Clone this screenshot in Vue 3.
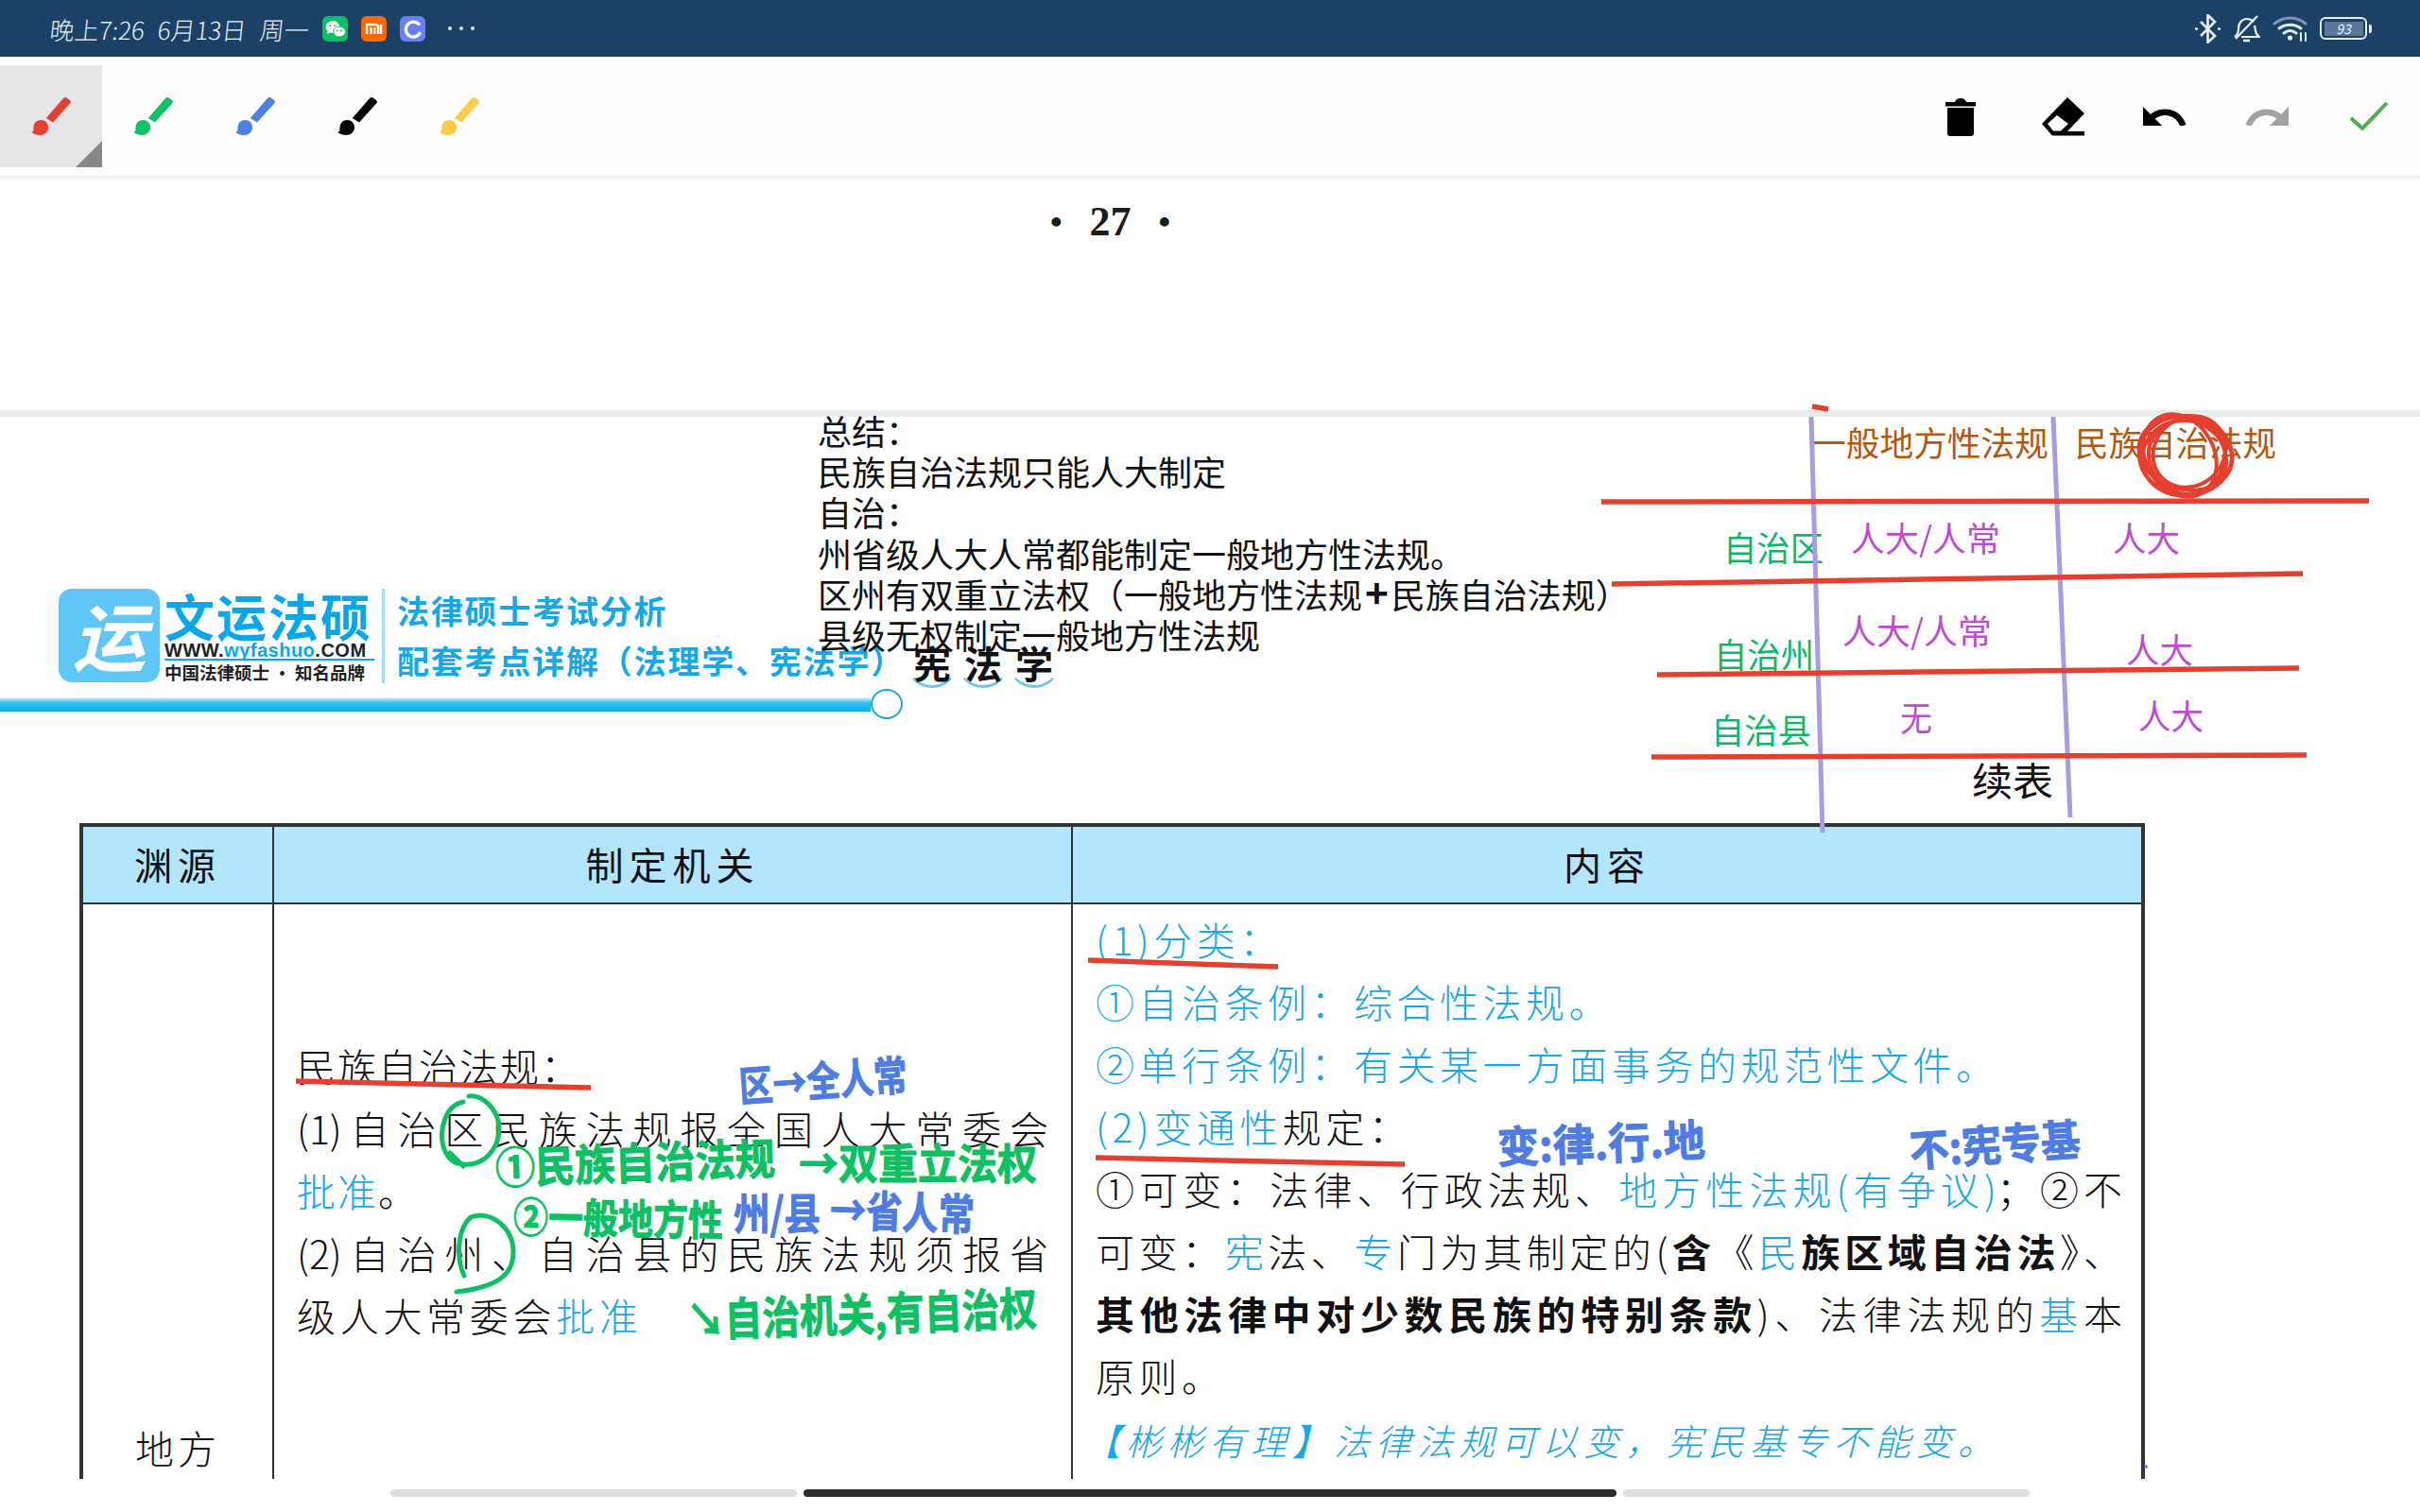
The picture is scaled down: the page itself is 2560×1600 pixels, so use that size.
<script setup>
const leftTools = [
  { color: '#e5402f', active: true },
  { color: '#08c463' },
  { color: '#4f7fe6' },
  { color: '#000000' },
  { color: '#ffcb45' }
]

const cn = (c, s) => Math.round(c + s * 0.36)

// typed notes on the canvas: left edge, centre line, size, width
const typed = [
  { t: '一般地方性法规', x: 1917, c: 470, s: 36, w: 250, fill: '#b4580f' },
  { t: '民族自治法规', x: 2195, c: 470, s: 36, w: 213, fill: '#b4580f' },
  { t: '自治区', x: 1823, c: 581, s: 36, w: 106, fill: '#0cb868' },
  { t: '自治州', x: 1813, c: 694, s: 36, w: 106, fill: '#0cb868' },
  { t: '自治县', x: 1810, c: 774, s: 36, w: 106, fill: '#0cb868' },
  { t: '人大/人常', x: 1958, c: 571, s: 36, w: 158, fill: '#bf4bd2' },
  { t: '人大/人常', x: 1949, c: 669, s: 36, w: 158, fill: '#bf4bd2' },
  { t: '人大', x: 2235, c: 571, s: 36, w: 71, fill: '#bf4bd2' },
  { t: '人大', x: 2249, c: 689, s: 36, w: 71, fill: '#bf4bd2' },
  { t: '人大', x: 2262, c: 759, s: 36, w: 69, fill: '#bf4bd2' },
  { t: '无', x: 2010, c: 761, s: 36, w: 34, fill: '#bf4bd2' },
  { t: '续表', x: 2086, c: 827, s: 41, w: 86, fill: '#111111' }
]

// pen writing over the page
const penGreen = '#0cc063'
const penBlue = '#4f7ce2'
const hand = [
  { t: '区→全人常', x: 782, c: 1150, s: 44, w: 178, fill: penBlue, r: -4 },
  { t: '①民族自治法规', x: 524, c: 1236, s: 46, w: 296, fill: penGreen, r: -2 },
  { t: '→双重立法权', x: 845, c: 1232, s: 44, w: 252, fill: penGreen, r: 0 },
  { t: '②一般地方性', x: 543, c: 1288, s: 44, w: 222, fill: penGreen, r: 1 },
  { t: '州/县', x: 776, c: 1284, s: 46, w: 92, fill: penBlue, r: 0 },
  { t: '→省人常', x: 878, c: 1280, s: 46, w: 153, fill: penBlue, r: 2 },
  { t: '↘自治机关,有自治权', x: 727, c: 1398, s: 48, w: 370, fill: penGreen, r: -2 },
  { t: '变:律.行.地', x: 1584, c: 1214, s: 46, w: 220, fill: penBlue, r: -2 },
  { t: '不:宪专基', x: 2020, c: 1218, s: 46, w: 181, fill: penBlue, r: -4 }
]

const redLines = [
  [1694, 531, 2506, 530],
  [1705, 618, 2436, 607],
  [1753, 714, 2432, 707],
  [1747, 801, 2440, 799],
  [313, 1144, 625, 1151],
  [1151, 1016, 1352, 1023],
  [1159, 1225, 1486, 1232],
  [1917, 430, 1934, 433]
]
const purpleLines = [
  [1916, 441, 1928, 881],
  [2172, 441, 2190, 865]
]
const scribble = [
  { cx: 2312, cy: 482, rx: 49, ry: 42, a: 4 },
  { cx: 2310, cy: 484, rx: 44, ry: 40, a: -12 },
  { cx: 2312, cy: 480, rx: 50, ry: 38, a: 14 },
  { cx: 2314, cy: 484, rx: 42, ry: 38, a: 30 },
  { cx: 2306, cy: 482, rx: 46, ry: 36, a: 60 },
  { cx: 2316, cy: 478, rx: 40, ry: 36, a: -40 }
]
</script>

<template>
  <div class="screen">
    <header class="statusbar">
      <div class="status-left">
        <span class="clock">晚上7:26</span>
        <span class="clock">6月13日</span>
        <span class="clock">周一</span>
        <div class="app-icons">
          <svg width="27" height="27" viewBox="0 0 27 27">
            <rect width="27" height="27" rx="6" fill="#07c160" />
            <ellipse cx="11" cy="11.500" rx="7.500" ry="6.500" fill="#fff" />
            <path d="M6 15l-1 4 4-2z" fill="#fff" />
            <ellipse cx="18" cy="16.500" rx="6.500" ry="5.500" fill="#fff" stroke="#07c160" stroke-width="1" />
            <circle cx="8.500" cy="10" r="1" fill="#07c160" />
            <circle cx="13" cy="10" r="1" fill="#07c160" />
            <circle cx="16" cy="15.500" r=".9" fill="#07c160" />
            <circle cx="20" cy="15.500" r=".9" fill="#07c160" />
          </svg>
          <svg width="27" height="27" viewBox="0 0 27 27">
            <rect width="27" height="27" rx="6" fill="#ff6700" />
            <path d="M6 19V9h9q3 0 3 3v7M10.500 12v7M14.200 12v7M21 9v10" fill="none" stroke="#fff" stroke-width="2.400" />
          </svg>
          <svg width="27" height="27" viewBox="0 0 27 27">
            <rect width="27" height="27" rx="6" fill="#6b7ff2" />
            <path d="M20 8.500a8 8 0 1 0 1 10" fill="none" stroke="#fff" stroke-width="3.400" stroke-linecap="round" />
          </svg>
        </div>
        <div class="dots"><i></i><i></i><i></i></div>
      </div>
      <div class="status-right">
        <svg width="29" height="31" viewBox="0 0 29 31" fill="none" stroke="#e8eef5" stroke-width="2.600">
          <path d="M7 8l15 15-7.500 7V1L22 8 7 23" />
          <circle cx="2.500" cy="15.500" r="1.600" fill="#e8eef5" stroke="none" />
          <circle cx="26.500" cy="15.500" r="1.600" fill="#e8eef5" stroke="none" />
        </svg>
        <svg width="28" height="29" viewBox="0 0 28 29" fill="none" stroke="#e8eef5" stroke-width="2.200">
          <path d="M1 23c3-2 4-4 4-9 0-6 4-10 9-10 3 0 5 1 7 3M22 11c1 6 1 9 5 12H8" />
          <path d="M10 27h7" stroke-width="2.600" />
          <path d="M25 1L2 25" />
        </svg>
        <svg width="37" height="27" viewBox="0 0 37 27" fill="none" stroke-linecap="round">
          <path d="M2 8c10-8 23-8 33 0" stroke="#7f97b3" stroke-width="3" />
          <path d="M7 13c7-5 16-5 23 0" stroke="#e8eef5" stroke-width="3" />
          <path d="M12 18c4-3 9-3 13 0" stroke="#e8eef5" stroke-width="3" />
          <circle cx="18.500" cy="23" r="2.600" fill="#e8eef5" />
          <path d="M30 18v8M35 18v8" stroke="#e8eef5" stroke-width="2" />
        </svg>
        <div class="battery">
          <div class="battery-body"><span>93</span></div>
          <i></i>
        </div>
      </div>
    </header>

    <nav class="toolbar">
      <div class="tool-group">
        <div v-for="(tool, i) in leftTools" :key="i" class="tool" :class="{ active: tool.active }">
          <svg width="42" height="41" viewBox="0 0 42 41" :fill="tool.color">
            <path d="M34 1q1.500-1.500 3.500-.5l3.500 2.500q1.500 1.500 .5 3L23 26.500 15.800 22z" />
            <path d="M10 24c5 0 8 3.500 8 8 0 4.500-4 8-9 8-3 0-6-1-9-3 2-.5 2.500-1.500 2.500-4.500 0-5 3-8.500 7.500-8.500z" />
          </svg>
        </div>
      </div>
      <div class="tool-group">
        <div class="tool">
          <svg width="32" height="41" viewBox="0 0 32 41">
            <path d="M0 5h10q1-4 6-4t6 4h10v4.500H0zM2 11h28v27q0 3-3 3H5q-3 0-3-3z" />
          </svg>
        </div>
        <div class="tool">
          <svg width="45" height="41" viewBox="0 0 45 41">
            <path d="M27 0l18 17-18 19h18v4.500H11L0 28z" />
            <path d="M16 19l12 9-8 7.500H12L6 28z" fill="#fffdfe" />
          </svg>
        </div>
        <div class="tool">
          <svg width="46" height="20" viewBox="0 0 46 20">
            <path d="M0 0v20h20z" />
            <path d="M7 13C18 2 36 3 42.500 20" fill="none" stroke="#000" stroke-width="6.500" />
          </svg>
        </div>
        <div class="tool">
          <svg width="46" height="20" viewBox="0 0 46 20" fill="#a2a2a2">
            <path d="M46 0v20H26z" />
            <path d="M39 13C28 2 10 3 3.500 20" fill="none" stroke="#a2a2a2" stroke-width="6.500" />
          </svg>
        </div>
        <div class="tool">
          <svg width="40" height="30" viewBox="0 0 40 30" fill="none" stroke="#4caf50" stroke-width="4">
            <path d="M1 17l12 11L39 1" />
          </svg>
        </div>
      </div>
    </nav>

    <main class="doc">
      <section class="page-top">
        <span class="bullet">•</span>
        <span>27</span>
        <span class="bullet">•</span>
      </section>
      <div class="page-gap"></div>

      <section class="page">
        <div class="page-head">
          <div class="logo-mark">运</div>
          <div class="brand">
            <div class="brand-name">文运法硕</div>
            <div class="brand-url">WWW.<b>wyfashuo</b>.COM</div>
            <div class="brand-tag">中国法律硕士 · 知名品牌</div>
          </div>
          <div class="head-divider"></div>
          <div class="head-titles">
            <div>法律硕士考试分析</div>
            <div class="head-sub">
              <span class="sub-text">配套考点详解（法理学、宪法学）</span>
              <span class="seal">宪</span><span class="seal">法</span><span class="seal">学</span>
            </div>
          </div>
        </div>
        <div class="head-bar">
          <div class="bar-line"></div>
          <div class="bar-knob"></div>
        </div>

        <div class="law-table">
          <div class="th">渊源</div>
          <div class="th">制定机关</div>
          <div class="th">内容</div>

          <div class="td source">地方</div>
          <div class="td organ">
            <p>民族自治法规：</p>
            <p class="fit">(1)自治区民族法规报全国人大常委会</p>
            <p><span class="cy">批准</span>。</p>
            <p class="fit">(2)自治州、自治县的民族法规须报省</p>
            <p class="wide">级人大常委会<span class="cy">批准</span></p>
          </div>
          <div class="td content">
            <p class="cy">(1)分类：</p>
            <p class="cy">①自治条例：综合性法规。</p>
            <p class="cy">②单行条例：有关某一方面事务的规范性文件。</p>
            <p><span class="cy">(2)变通性</span>规定：</p>
            <p class="fit">①可变：法律、行政法规、<span class="cy">地方性法规(有争议)</span>；②不</p>
            <p class="fit">可变：<span class="cy">宪</span>法、<span class="cy">专</span>门为其制定的(<b>含</b>《<span class="cy">民</span><b>族区域自治法</b>》、</p>
            <p class="fit"><b>其他法律中对少数民族的特别条款</b>)、法律法规的<span class="cy">基</span>本</p>
            <p>原则。</p>
            <p class="cy tip"><b>【</b>彬彬有理<b>】</b>法律法规可以变，宪民基专不能变。</p>
          </div>
        </div>

        <div class="scrollbars">
          <i></i>
          <i class="on"></i>
          <i></i>
        </div>
      </section>
    </main>

    <div class="notes">
      <div>总结：</div>
      <div>民族自治法规只能人大制定</div>
      <div>自治：</div>
      <div>州省级人大人常都能制定一般地方性法规。</div>
      <div>区州有双重立法权（一般地方性法规<b class="plus">+</b>民族自治法规）</div>
      <div>县级无权制定一般地方性法规</div>
    </div>

    <svg class="ink" width="2560" height="1600" viewBox="0 0 2560 1600">
      <text
        v-for="(item, i) in typed"
        :key="'t' + i"
        :x="item.x"
        :y="cn(item.c, item.s)"
        :font-size="item.s"
        :fill="item.fill"
        :textLength="item.w"
        lengthAdjust="spacingAndGlyphs"
      >{{ item.t }}</text>

      <line v-for="(l, i) in purpleLines" :key="'p' + i" :x1="l[0]" :y1="l[1]" :x2="l[2]" :y2="l[3]" stroke="#a99ce6" stroke-width="5" />
      <line v-for="(l, i) in redLines" :key="'r' + i" :x1="l[0]" :y1="l[1]" :x2="l[2]" :y2="l[3]" stroke="#e5402f" stroke-width="5.500" />
      <ellipse
        v-for="(e, i) in scribble"
        :key="'s' + i"
        :cx="e.cx"
        :cy="e.cy"
        :rx="e.rx"
        :ry="e.ry"
        :transform="`rotate(${e.a} ${e.cx} ${e.cy})`"
        fill="none"
        stroke="#e5402f"
        stroke-width="4"
      />

      <path d="M490 1166c-20 4-24 30-22 42 2 14 10 24 22 24 20 2 38-14 38-38 0-18-16-36-32-34M476 1220l14 14" fill="none" :stroke="penGreen" stroke-width="5" stroke-linecap="round" />
      <path d="M491 1350C482 1330 484 1300 498 1288 520 1280 543 1300 543 1325 543 1350 525 1362 483 1367" fill="none" :stroke="penGreen" stroke-width="5" stroke-linecap="round" />
      <circle cx="2270" cy="1552" r="2" :fill="penBlue" />

      <text
        v-for="(item, i) in hand"
        :key="'h' + i"
        class="pen"
        :x="item.x"
        :y="cn(item.c, item.s)"
        :font-size="item.s"
        :fill="item.fill"
        :stroke="item.fill"
        :textLength="item.w"
        lengthAdjust="spacingAndGlyphs"
        :transform="`rotate(${item.r} ${item.x} ${item.c})`"
      >{{ item.t }}</text>
    </svg>
  </div>
</template>

<style scoped>
.screen {
  position: relative;
  width: 2560px;
  height: 1600px;
  overflow: hidden;
  display: flex;
  flex-direction: column;
  background: #fff;
  color: #111;
  font-family: "Noto Sans CJK SC", "Noto Sans", sans-serif;
}

.statusbar {
  height: 60px;
  flex: none;
  background: #1b4166;
  display: flex;
  align-items: center;
  justify-content: space-between;
  padding: 0 51px 0 53px;
  color: #e8eef5;
}
.status-left { display: flex; align-items: center; }
.clock { font-size: 26px; font-weight: 300; margin-right: 14px; transform: skewX(-6deg); white-space: nowrap; }
.app-icons { display: flex; gap: 14px; }
.dots { display: flex; gap: 8px; margin-left: 24px; }
.dots i { width: 4px; height: 4px; border-radius: 50%; background: #e8eef5; }
.status-right { display: flex; align-items: center; gap: 13px; }
.battery { display: flex; align-items: center; gap: 2px; }
.battery-body {
  width: 50px;
  height: 24px;
  box-sizing: border-box;
  border: 2.500px solid #e8eef5;
  border-radius: 6px;
  padding: 2.500px;
  display: flex;
}
.battery-body span {
  flex: 1;
  background: #58779b;
  font-size: 14px;
  line-height: 14px;
  text-align: center;
  font-style: italic;
}
.battery i { width: 3px; height: 9px; background: #e8eef5; border-radius: 0 2px 2px 0; }

.toolbar {
  height: 126px;
  flex: none;
  background: #fffdfe;
  box-shadow: 0 1px 5px rgba(0, 0, 0, 0.12);
  display: flex;
  justify-content: space-between;
  position: relative;
  z-index: 1;
}
.tool-group { display: flex; }
.tool {
  position: relative;
  width: 108px;
  height: 108px;
  margin-top: 9px;
  display: flex;
  align-items: center;
  justify-content: center;
}
.tool.active { background: #e6e6e6; }
.tool.active::after {
  content: "";
  position: absolute;
  right: 0;
  bottom: 0;
  border-style: solid;
  border-width: 0 0 28px 28px;
  border-color: transparent transparent #878787 transparent;
}

.doc { flex: 1; min-height: 0; display: flex; flex-direction: column; }
.page-top {
  height: 248px;
  flex: none;
  box-sizing: border-box;
  padding: 24px 0 0 1111px;
  display: flex;
  align-items: flex-start;
  gap: 29px;
  font-family: "Liberation Serif", serif;
  font-weight: 700;
  font-size: 44px;
  line-height: 50px;
  color: #1a1a1a;
}
.bullet { font-size: 36px; }
.page-gap { height: 7px; flex: none; background: #e8ecec; }
.page { flex: 1; min-height: 0; padding-top: 182px; display: flex; flex-direction: column; }

.page-head { height: 100px; flex: none; display: flex; padding-left: 62px; }
.logo-mark {
  width: 107px;
  height: 99px;
  border-radius: 14px;
  background: #5fc6f5;
  color: #fff;
  font-size: 78px;
  font-weight: 700;
  line-height: 94px;
  text-align: center;
  font-style: italic;
}
.brand { width: 222px; margin-left: 5px; color: #0aa6ea; }
.brand-name { font-size: 53px; font-weight: 700; line-height: 56px; letter-spacing: 2px; white-space: nowrap; }
.brand-url {
  font-family: "Liberation Sans", sans-serif;
  font-weight: 700;
  font-size: 20px;
  line-height: 18px;
  letter-spacing: 0.500px;
  color: #222;
  border-bottom: 2px solid #0aa6ea;
  white-space: nowrap;
}
.brand-url b { color: #0aa6ea; }
.brand-tag { font-size: 18.500px; font-weight: 700; line-height: 24px; color: #222; white-space: nowrap; }
.head-divider { width: 3px; height: 100px; background: #9edcf7; margin-left: 8px; }
.head-titles {
  margin-left: 13px;
  color: #14a8e8;
  font-size: 34px;
  font-weight: 700;
  letter-spacing: 1.800px;
  line-height: 44px;
  padding-top: 1px;
}
.head-sub { display: flex; margin-top: 9px; white-space: nowrap; }
.sub-text { width: 539px; }
.seal {
  width: 50px;
  height: 46px;
  box-sizing: content-box;
  border-radius: 50%;
  border: 2px solid transparent;
  border-bottom: 3px solid #6cc7ee;
  color: #111;
  text-align: center;
  font-size: 40px;
  letter-spacing: 0;
}

.head-bar { height: 32px; margin-top: 6px; flex: none; display: flex; align-items: center; }
.bar-line { width: 921px; height: 15px; background: linear-gradient(#e2f5fd, #3fc0f3 35%, #00aeef); }
.bar-knob {
  width: 34px;
  height: 32px;
  box-sizing: border-box;
  border-radius: 50%;
  background: #fff;
  border: 2px solid #14a8e0;
}

.law-table {
  margin: 110px 0 0 84px;
  width: 2185px;
  height: 694px;
  flex: none;
  box-sizing: border-box;
  border: solid #333;
  border-width: 4px 4px 0;
  display: grid;
  grid-template-columns: 200px 845px 1fr;
  grid-template-rows: 82px 1fr;
  overflow: hidden;
  font-weight: 300;
  font-size: 41px;
}
.th {
  background: #b3e5fd;
  border-bottom: 2px solid #333;
  display: flex;
  align-items: center;
  justify-content: center;
  padding-bottom: 3px;
  font-size: 40px;
  font-weight: 400;
  letter-spacing: 6px;
}
.th + .th, .td + .td { border-left: 2px solid #333; }
.td { min-width: 0; line-height: 66px; }
.td p { margin: 0; white-space: nowrap; }
.source { padding-top: 541px; text-align: center; letter-spacing: 4px; }
.organ { padding: 137px 24px 0 24px; }
.content { padding: 3px 20px 0 24px; letter-spacing: 4.500px; }
.organ p { letter-spacing: 2px; }
.organ p.wide { letter-spacing: 4.700px; }
.fit { text-align: justify; text-align-last: justify; letter-spacing: 0 !important; white-space: normal !important; }
.cy { color: #1aa7e6; }
.fit b { font-weight: 700; }
.tip { margin: 3px 0 0 -12px !important; font-size: 38px; letter-spacing: 6px; font-style: italic; }

.scrollbars { display: flex; gap: 7px; padding: 11px 0 0 413px; flex: none; }
.scrollbars i { width: 430px; height: 8px; border-radius: 4px; background: #dedede; }
.scrollbars i.on { width: 860px; background: #2d2d2d; }

.notes {
  position: absolute;
  left: 865px;
  top: 434px;
  font-size: 36px;
  line-height: 43.200px;
  color: #111;
  white-space: nowrap;
}
.plus { font-size: 42px; line-height: 36px; padding: 0 3px; }
.ink { position: absolute; left: 0; top: 0; pointer-events: none; }
.ink text { font-family: "Noto Sans CJK SC", sans-serif; }
.ink text.pen { font-weight: 700; stroke-width: 1; }
</style>
